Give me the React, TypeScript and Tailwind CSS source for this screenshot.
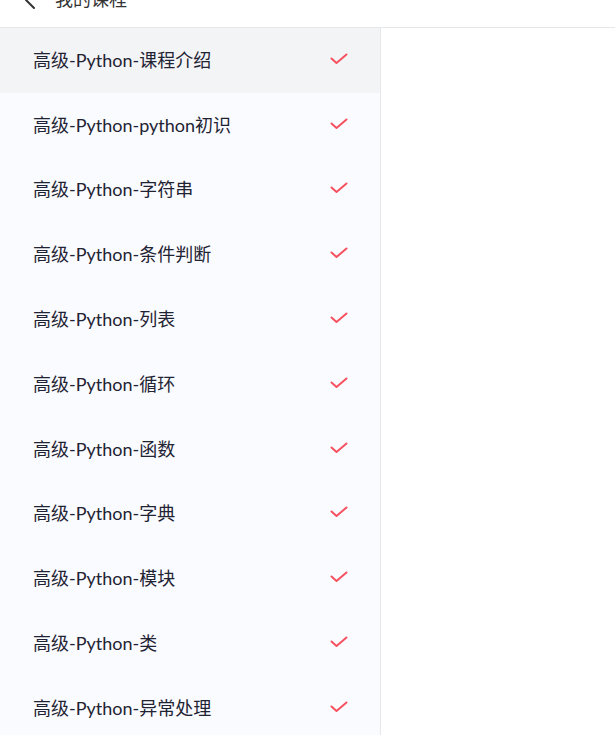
import React from "react";

const items = [
  "高级-Python-课程介绍",
  "高级-Python-python初识",
  "高级-Python-字符串",
  "高级-Python-条件判断",
  "高级-Python-列表",
  "高级-Python-循环",
  "高级-Python-函数",
  "高级-Python-字典",
  "高级-Python-模块",
  "高级-Python-类",
  "高级-Python-异常处理",
];

function Check() {
  return (
    <svg width="18" height="12" viewBox="0 0 18 12" fill="none">
      <path d="M1.5 5.5 L6.5 10 L16.5 1.5" stroke="#f5515f" strokeWidth="2" strokeLinecap="round" strokeLinejoin="round" />
    </svg>
  );
}

export default function App() {
  return (
    <div
      className="w-[615px] h-[735px] overflow-hidden bg-white flex flex-col"
      style={{ fontFamily: 'Lato, "Noto Sans CJK SC", sans-serif' }}
    >
      <div className="-mt-[28px] h-[56px] shrink-0 flex items-center border-b border-[#e5e7eb] bg-white">
        <svg className="ml-[24px]" width="12" height="20" viewBox="0 0 12 20" fill="none">
          <path d="M10 2 L2 10 L10 18" stroke="#333" strokeWidth="2" strokeLinecap="round" strokeLinejoin="round" />
        </svg>
        <span className="ml-[19px] text-[18px] text-[#333]">我的课程</span>
      </div>
      <div className="flex flex-1 min-h-0">
        <div className="w-[381px] shrink-0 bg-[#f9fbfe] border-r border-[#e5e7eb] flex flex-col">
          {items.map((t, i) => (
            <div
              key={i}
              className={`h-[64.8px] shrink-0 flex items-center justify-between pl-[33px] pr-[32px] ${
                i === 0 ? "bg-[#f3f4f6]" : ""
              }`}
            >
              <span className="text-[18px] text-[#1f2333]">{t}</span>
              <span className="-mt-[3px]">
                <Check />
              </span>
            </div>
          ))}
        </div>
        <div className="flex-1 bg-white" />
      </div>
    </div>
  );
}
